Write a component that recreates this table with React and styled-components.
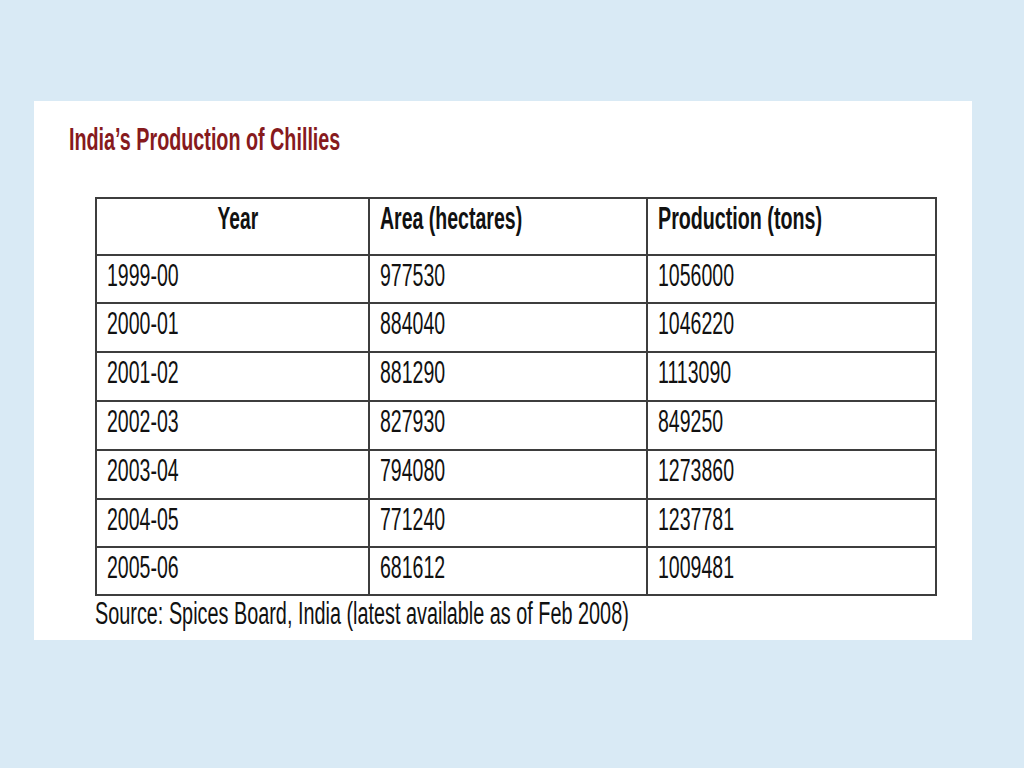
import React from "react";
import styled, { createGlobalStyle } from "styled-components";

const GlobalStyle = createGlobalStyle`
  html, body {
    margin: 0;
    padding: 0;
    background: #d9eaf5;
  }
  body {
    font-family: "Liberation Sans", Arial, sans-serif;
  }
`;

const Page = styled.div`
  width: 1024px;
  height: 768px;
  box-sizing: border-box;
  padding: 101px 52px 128px 34px;
  background: #d9eaf5;
`;

const Panel = styled.section`
  width: 938px;
  height: 539px;
  box-sizing: border-box;
  background: #ffffff;
  padding: 22px 0 0 35px;
`;

const Narrow = styled.span`
  display: inline-block;
  white-space: nowrap;
  transform: scaleX(${(p) => p.$k});
  transform-origin: ${(p) => p.$origin || "left"} center;
`;

const Title = styled.h1`
  margin: 0;
  height: 32px;
  font-size: 32px;
  line-height: 1;
  font-weight: bold;
  color: #861a1d;
`;

const Grid = styled.div`
  box-sizing: border-box;
  margin: 42px 0 0 26px;
  width: 842px;
  display: grid;
  grid-template-columns: 273px 278px 289px;
  grid-template-rows: 57px 48px 49px 49px 49px 49px 48px 48px;
  border-top: 2px solid #3d3d3d;
  border-left: 2px solid #3d3d3d;
`;

const Cell = styled.div`
  box-sizing: border-box;
  border-right: 2px solid #3d3d3d;
  border-bottom: 2px solid #3d3d3d;
  display: flex;
  align-items: flex-start;
  justify-content: ${(p) => (p.$center ? "center" : "flex-start")};
  padding: 3px 0 0 ${(p) => (p.$center ? "11px" : "10px")};
  font-size: 32px;
  font-weight: ${(p) => (p.$head ? "bold" : "normal")};
  line-height: 1;
  color: #111111;
`;

const Source = styled.p`
  margin: 2px 0 0 26px;
  font-size: 31px;
  line-height: 1;
  color: #111111;
`;

const rows = [
  ["1999-00", "977530", "1056000"],
  ["2000-01", "884040", "1046220"],
  ["2001-02", "881290", "1113090"],
  ["2002-03", "827930", "849250"],
  ["2003-04", "794080", "1273860"],
  ["2004-05", "771240", "1237781"],
  ["2005-06", "681612", "1009481"],
];

export default function App() {
  return (
    <>
      <GlobalStyle />
      <Page>
        <Panel>
          <Title>
            <Narrow $k={0.617}>India’s Production of Chillies</Narrow>
          </Title>
          <Grid>
            <Cell $head $center>
              <Narrow $k={0.6} $origin="center">
                Year
              </Narrow>
            </Cell>
            <Cell $head>
              <Narrow $k={0.61}>Area (hectares)</Narrow>
            </Cell>
            <Cell $head>
              <Narrow $k={0.615}>Production (tons)</Narrow>
            </Cell>
            {rows.map((r) =>
              r.map((v, i) => (
                <Cell key={r[0] + i}>
                  <Narrow $k={0.61}>{v}</Narrow>
                </Cell>
              ))
            )}
          </Grid>
          <Source>
            <Narrow $k={0.64}>
              Source: Spices Board, India (latest available as of Feb 2008)
            </Narrow>
          </Source>
        </Panel>
      </Page>
    </>
  );
}
